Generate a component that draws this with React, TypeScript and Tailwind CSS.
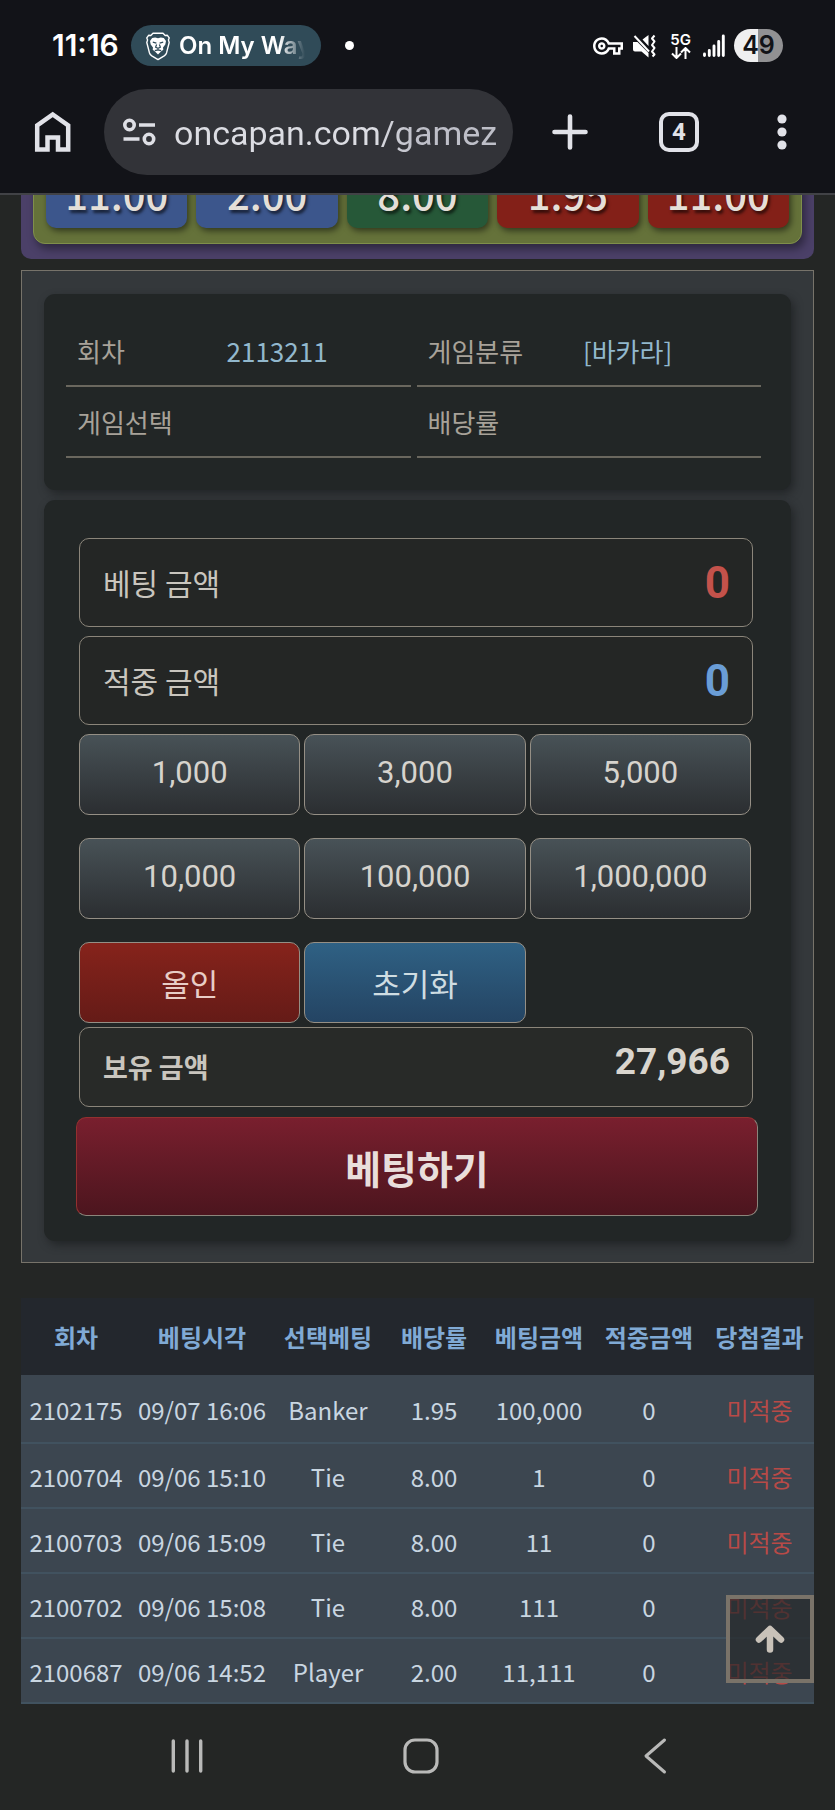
import React, { useState } from "react";
import { MdOutlineVpnKey } from "react-icons/md";

const odds = [
  { value: "11.00", tone: "bg-[#3c568c]" },
  { value: "2.00", tone: "bg-[#3c568c]" },
  { value: "8.00", tone: "bg-[#265838]" },
  { value: "1.95", tone: "bg-[#832018]" },
  { value: "11.00", tone: "bg-[#832018]" },
];

const info = [
  { label: "회차", value: "2113211" },
  { label: "게임분류", value: "[바카라]" },
  { label: "게임선택", value: "" },
  { label: "배당률", value: "" },
];

const chips = [1000, 3000, 5000, 10000, 100000, 1000000];

const columns = [
  { label: "회차", width: "w-[110px]" },
  { label: "베팅시각", width: "w-[142px]" },
  { label: "선택베팅", width: "w-[110px]" },
  { label: "배당률", width: "w-[102px]" },
  { label: "베팅금액", width: "w-[108px]" },
  { label: "적중금액", width: "w-[112px]" },
  { label: "당첨결과", width: "w-[109px]" },
];

const bets = [
  ["2102175", "09/07 16:06", "Banker", "1.95", "100,000", "0"],
  ["2100704", "09/06 15:10", "Tie", "8.00", "1", "0"],
  ["2100703", "09/06 15:09", "Tie", "8.00", "11", "0"],
  ["2100702", "09/06 15:08", "Tie", "8.00", "111", "0"],
  ["2100687", "09/06 14:52", "Player", "2.00", "11,111", "0"],
];

const BALANCE = 27966;

function LionShield() {
  return (
    <svg width="26" height="30" viewBox="0 0 26 30" fill="none" aria-hidden="true">
      <path
        d="M8 2.2h10l2.2 2.3 2.2-.2 1.8 2.6-.8 2 .8 2.6-2.6 10.2c-.4 1.4-1.2 2.4-2.4 3.2L13 28.6l-6.200-3.700c-1.200-.8-2-1.800-2.400-3.200L1.800 11.500l.8-2.600-.8-2 1.800-2.600 2.200.2z"
        stroke="#fff"
        strokeWidth="1.400"
        strokeLinejoin="round"
      />
      <path
        fill="#fff"
        d="M7.200 7l3-.6 2.800.8 2.800-.8 3 .6 2.200 3-.7 3.600-2.300 3 .3 2.200-2.300 1.700L13 23.400l-3-2.900-2.300-1.700.3-2.200-2.300-3L5 10z"
      />
      <path
        d="M7.800 11.200l3.600.9M18.200 11.200l-3.600.9M11.600 13.500l-1 2.700 2.400 1.200 2.400-1.200-1-2.700M13 17.200v1.800M9.800 19.600l3.200-.8 3.200.8"
        stroke="#304b58"
        strokeWidth="1.200"
      />
    </svg>
  );
}

function MuteVibrate() {
  return (
    <svg width="24" height="24" viewBox="0 0 24 24" fill="none" aria-hidden="true">
      <path fill="#fff" d="M1 8h4.500l11 11v4.500L9.500 17.500H3a2 2 0 0 1-2-2zM10.500 5.500L16.500 1v11z" />
      <path d="M2.500 2L17 17.500" stroke="#fff" strokeWidth="2" />
      <path d="M22.500 1.500l-2.500 3 2.500 3-2.500 3.500 2.500 3-2.500 3.500 2.500 3-2 2" stroke="#fff" strokeWidth="2" strokeLinejoin="round" />
    </svg>
  );
}

function StatusBar() {
  return (
    <div className="flex h-[89px] items-center pt-[2px] pr-[52px] pl-[52px] font-['Inter',sans-serif] text-white">
      <span className="w-[79px] text-[30px] font-semibold">11:16</span>
      <div className="flex h-[41px] w-[190px] items-center rounded-full bg-[#304b58] pl-[14px]">
        <LionShield />
        <span className="ml-[8px] w-[134px] text-2xl font-semibold whitespace-nowrap [mask-image:linear-gradient(to_right,#000_75%,transparent_94%)]">
          On My Way
        </span>
      </div>
      <span className="ml-6 size-[9px] rounded-full bg-white" />
      <div className="ml-auto flex items-center">
        <MdOutlineVpnKey size={30} aria-hidden="true" />
        <span className="ml-[9px]">
          <MuteVibrate />
        </span>
        <div className="ml-[14px] flex flex-col items-center">
          <span className="text-[15px] leading-[14px] font-semibold">5G</span>
          <svg width="20" height="12" viewBox="0 0 20 12" fill="none" stroke="#fff" strokeWidth="2" aria-hidden="true">
            <path d="M5.500 0v10.500M1 6.500l4.500 4.500L10 6.500M14.500 12V1.500M10 5.500L14.500 1 19 5.500" />
          </svg>
        </div>
        <svg className="ml-[12px]" width="22" height="24" viewBox="0 0 22 24" stroke="#fff" strokeWidth="2.900" strokeLinecap="round" aria-hidden="true">
          <path d="M1.500 20v1.500M6.300 16.500v5M11 12v9.500M15.700 7.500v14M20.300 2v19.500" />
        </svg>
        <span className="ml-[9px] flex h-[33px] w-[49px] items-center justify-center rounded-full bg-linear-to-r from-[#efeff0] from-50% to-[#919193] to-50% text-[25px] font-semibold text-[#121318]">
          49
        </span>
      </div>
    </div>
  );
}

function Toolbar() {
  return (
    <div className="flex items-center pr-[48px] pb-[18px] pl-[34px]">
      <button type="button" aria-label="홈">
        <svg width="38" height="42" viewBox="0 0 38 42" fill="none" stroke="#e1e2e8" strokeWidth="4.500" aria-hidden="true">
          <path d="M3.200 38.500V14.500L18.700 3.500l15.500 11v24H24V26.500H13.500v12z" />
        </svg>
      </button>
      <div className="ml-[32px] flex h-[86px] flex-1 items-center rounded-full bg-[#323338] pr-[17px] pl-[18px]">
        <svg className="shrink-0" width="34" height="30" viewBox="0 0 34 30" fill="none" stroke="#dedfe5" strokeWidth="3.600" aria-hidden="true">
          <circle cx="7.500" cy="8" r="4.700" />
          <circle cx="27" cy="22" r="4.700" />
          <path d="M17 8h16M1.500 22h16" />
        </svg>
        <input
          aria-label="주소"
          defaultValue="oncapan.com/gamezone"
          className="ml-[18px] w-0 min-w-0 flex-1 bg-linear-to-r from-[#dcdde3] from-62% to-[#bebfc8] to-75% bg-clip-text pt-[2px] font-['Roboto',sans-serif] text-[34px] leading-[48px] text-transparent outline-none"
        />
      </div>
      <button type="button" aria-label="새 탭" className="ml-[39px]">
        <svg width="36" height="36" viewBox="0 0 36 36" stroke="#e1e2e8" strokeWidth="4.600" strokeLinecap="round" aria-hidden="true">
          <path d="M18 2.500v31M2.500 18h31" />
        </svg>
      </button>
      <button
        type="button"
        aria-label="탭 4개"
        className="ml-[71px] flex size-10 items-center justify-center rounded-[10px] border-4 border-[#e1e2e8] font-['Roboto',sans-serif] text-2xl font-bold text-[#e1e2e8]"
      >
        4
      </button>
      <button type="button" aria-label="메뉴" className="ml-[78px]">
        <svg width="10" height="36" viewBox="0 0 10 36" fill="#e1e2e8" aria-hidden="true">
          <circle cx="5" cy="5" r="4.600" />
          <circle cx="5" cy="18" r="4.600" />
          <circle cx="5" cy="31" r="4.600" />
        </svg>
      </button>
    </div>
  );
}

function OddsStrip() {
  return (
    <div className="flex h-16 items-end overflow-hidden">
      <div className="w-full shrink-0 rounded-[10px] bg-[#4b4068] px-3 pb-[15px]">
        <div className="grid grid-cols-5 gap-[9px] rounded-xl border border-[#7f8f4b] bg-[#65723a] px-3 pt-4 pb-[15px] shadow-[3px_5px_8px_rgba(0,0,0,0.4)]">
          {odds.map((o, i) => (
            <button
              key={i}
              type="button"
              className={`${o.tone} flex h-[90px] items-end justify-center rounded-[10px] pb-[12px] text-[40px] leading-[46px] font-medium text-[#e4dfd8] shadow-[2px_3px_6px_rgba(0,0,0,0.5)] [text-shadow:2px_3px_3px_rgba(0,0,0,0.6)]`}
            >
              {o.value}
            </button>
          ))}
        </div>
      </div>
    </div>
  );
}

const cardClass = "rounded-[11px] bg-[#222626] shadow-[3px_4px_8px_rgba(20,22,23,0.55)]";
const boxClass = "mr-[4px] flex items-center justify-between rounded-[10px] border border-[#8b857a] pr-[22px] pl-[23px]";
const chipClass =
  "flex h-[81px] items-center justify-center rounded-[10px] border border-[#958f85] bg-linear-to-b";

function BetPanel() {
  const [bet, setBet] = useState(0);
  return (
    <section className="mt-[11px] border border-[#77736a] bg-[#34383b] px-[22px] pt-[23px] pb-[21px]">
      <dl className={`${cardClass} grid grid-cols-2 gap-x-[6px] pt-[22px] pr-[30px] pb-[32px] pl-[22px] text-[26px]`}>
        {info.map((row) => (
          <div key={row.label} className="flex h-[71px] items-center border-b-2 border-[#6a675e] pl-[11px]">
            <dt className="w-[34%] shrink-0 text-[#a8a299]">{row.label}</dt>
            <dd className="w-[52%] text-center text-[#92b8cd]">{row.value}</dd>
          </div>
        ))}
      </dl>
      <form
        className={`${cardClass} mt-[10px] pt-[38px] pr-[34px] pb-[25px] pl-[35px]`}
        onSubmit={(e) => e.preventDefault()}
      >
        <div className={`${boxClass} h-[89px] bg-[#242625]`}>
          <label htmlFor="stake" className="text-[30px] text-[#c9c5be]">베팅 금액</label>
          <output id="stake" className="font-['Roboto',sans-serif] text-[44px] font-bold text-[#c4524b]">
            {bet.toLocaleString("en-US")}
          </output>
        </div>
        <div className={`${boxClass} mt-[9px] h-[89px] bg-[#242625]`}>
          <label htmlFor="payout" className="text-[30px] text-[#c9c5be]">적중 금액</label>
          <output id="payout" className="font-['Roboto',sans-serif] text-[44px] font-bold text-[#6a9dd6]">0</output>
        </div>
        <div className="mt-[9px] mr-[6px] grid grid-cols-3 gap-x-[4px] gap-y-[23px]">
          {chips.map((c) => (
            <button
              key={c}
              type="button"
              onClick={() => setBet(bet + c)}
              className={`${chipClass} from-[#485257] to-[#2b2e31] pb-[2px] font-['Roboto',sans-serif] text-[31px] text-[#d6d3cd]`}
            >
              {c.toLocaleString("en-US")}
            </button>
          ))}
          <button
            type="button"
            onClick={() => setBet(BALANCE)}
            className={`${chipClass} from-[#86231b] to-[#651b17] pt-[2px] text-[31px] text-[#e8cdc6]`}
          >
            올인
          </button>
          <button
            type="button"
            onClick={() => setBet(0)}
            className={`${chipClass} from-[#2f6184] to-[#244463] pt-[2px] text-[31px] text-[#cfdde2]`}
          >
            초기화
          </button>
        </div>
        <div className={`${boxClass} mt-[4px] h-[80px] bg-[#282a28]`}>
          <label htmlFor="balance" className="text-[27px] font-bold text-[#c9c5be]">보유 금액</label>
          <output id="balance" className="pb-[10px] font-['Roboto',sans-serif] text-[37px] font-bold text-[#d9d5ce]">
            {BALANCE.toLocaleString("en-US")}
          </output>
        </div>
        <button
          type="submit"
          className="mt-[10px] -ml-[3px] flex h-[99px] w-[calc(100%+4px)] items-center justify-center rounded-[10px] border border-t-[#93302f] border-r-[#8b857b] border-b-[#8b857b] border-l-[#93302f] bg-linear-to-b from-[#791f2e] to-[#4c151e] pt-[2px] text-[39px] font-bold text-[#e9dedb]"
        >
          베팅하기
        </button>
      </form>
    </section>
  );
}

function History() {
  return (
    <table className="mt-[35px] w-full table-fixed border-collapse text-center text-2xl whitespace-nowrap">
      <thead>
        <tr className="h-[77px] bg-[#23272d] text-[#80aad5]">
          {columns.map((c) => (
            <th key={c.label} scope="col" className={`${c.width} p-0 font-bold`}>
              {c.label}
            </th>
          ))}
        </tr>
      </thead>
      <tbody className="border-b-2 border-[#43586a] bg-[#3c4650] text-[#c9d6e1]">
        {bets.map((b) => (
          <tr key={b[0]} className="h-[65px] border-b-2 border-[#41525f] first:h-[68px]">
            {b.map((cell, i) => (
              <td key={i} className="p-0 pt-[2px]">{cell}</td>
            ))}
            <td className="p-0 pt-[2px] text-[#b84a47]">미적중</td>
          </tr>
        ))}
      </tbody>
    </table>
  );
}

const navButton = "flex w-[38px] items-center justify-center";

function NavBar() {
  return (
    <nav className="flex h-[104px] items-center justify-between pr-[161px] pl-[168px]">
      <button type="button" aria-label="최근 앱" className={navButton}>
        <svg width="34" height="36" viewBox="0 0 34 36" stroke="#b9b9b8" strokeWidth="3.400" strokeLinecap="round" aria-hidden="true">
          <path d="M3.300 3v30M17 3v30M30.700 3v30" />
        </svg>
      </button>
      <button type="button" aria-label="홈 화면" className={navButton}>
        <svg width="38" height="38" viewBox="0 0 38 38" fill="none" stroke="#b9b9b8" strokeWidth="3.200" aria-hidden="true">
          <rect x="3" y="3" width="32" height="32" rx="10" />
        </svg>
      </button>
      <button type="button" aria-label="뒤로" className={navButton}>
        <svg width="26" height="38" viewBox="0 0 26 38" fill="none" stroke="#b9b9b8" strokeWidth="3" strokeLinecap="round" strokeLinejoin="round" aria-hidden="true">
          <path d="M22.500 3L4 19l18.500 16" />
        </svg>
      </button>
    </nav>
  );
}

export default function App() {
  return (
    <div className="min-h-screen bg-[#242625] font-['Noto_Sans_CJK_KR',sans-serif]">
      <header className="border-b-2 border-[#414246] bg-[#121318]">
        <StatusBar />
        <Toolbar />
      </header>
      <main className="relative px-[21px]">
        <OddsStrip />
        <BetPanel />
        <History />
        <button
          type="button"
          aria-label="맨 위로"
          className="absolute right-[21px] bottom-[21px] flex size-[88px] items-center justify-center border-4 border-[#7a7369] bg-[#252829]/70"
        >
          <svg width="30" height="28" viewBox="0 0 30 28" fill="none" stroke="#c9c2b9" strokeWidth="6.500" strokeLinecap="round" strokeLinejoin="round" aria-hidden="true">
            <path d="M4 14.500L15 4l11 10.500M15 5v19.500" />
          </svg>
        </button>
      </main>
      <NavBar />
    </div>
  );
}
